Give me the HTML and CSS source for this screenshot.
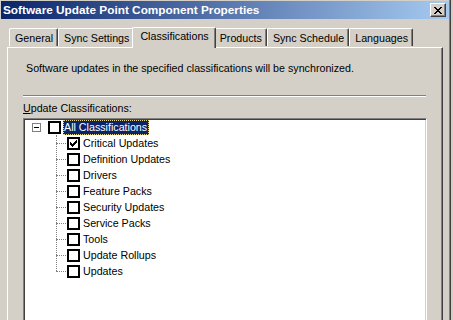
FILE: index.html
```html
<!DOCTYPE html>
<html lang="en">
<head>
  <meta charset="UTF-8">
  <title>Software Update Point Component Properties</title>
  <link rel="stylesheet" href="styles.css">
</head>
<body>
  <div class="window">
    <div class="titlebar">
      <span class="title">Software Update Point Component Properties</span>
      <button class="close-btn" title="Close">
        <svg width="8" height="7" viewBox="0 0 8 7" shape-rendering="crispEdges">
          <path d="M0 0h2v1h-2z M6 0h2v1h-2z M1 1h2v1h-2z M5 1h2v1h-2z M2 2h4v1h-4z M3 3h2v1h-2z M2 4h4v1h-4z M1 5h2v1h-2z M5 5h2v1h-2z M0 6h2v1h-2z M6 6h2v1h-2z" fill="#000"/>
        </svg>
      </button>
    </div>

    <div class="client">
      <div class="tabs">
        <div class="tab">General</div>
        <div class="tab">Sync Settings</div>
        <div class="tab active">Classifications</div>
        <div class="tab">Products</div>
        <div class="tab">Sync Schedule</div>
        <div class="tab">Languages</div>
      </div>

      <div class="panel">
        <p class="intro">Software updates in the specified classifications will be synchronized.</p>
        <div class="separator"></div>
        <div class="label"><u>U</u>pdate Classifications:</div>

        <div class="tree">
          <div class="node root">
            <span class="expander"></span>
            <span class="check"></span>
            <span class="text selected">All Classifications</span>
          </div>
          <div class="children">
            <div class="node">
              <span class="check checked">
                <svg width="7" height="7" viewBox="0 0 7 7" shape-rendering="crispEdges">
                  <path d="M0 2h1v3h-1z M1 3h1v3h-1z M2 4h1v3h-1z M3 3h1v3h-1z M4 2h1v3h-1z M5 1h1v3h-1z M6 0h1v3h-1z" fill="#000"/>
                </svg>
              </span>
              <span class="text">Critical Updates</span>
            </div>
            <div class="node"><span class="check"></span><span class="text">Definition Updates</span></div>
            <div class="node"><span class="check"></span><span class="text">Drivers</span></div>
            <div class="node"><span class="check"></span><span class="text">Feature Packs</span></div>
            <div class="node"><span class="check"></span><span class="text">Security Updates</span></div>
            <div class="node"><span class="check"></span><span class="text">Service Packs</span></div>
            <div class="node"><span class="check"></span><span class="text">Tools</span></div>
            <div class="node"><span class="check"></span><span class="text">Update Rollups</span></div>
            <div class="node"><span class="check"></span><span class="text">Updates</span></div>
          </div>
        </div>
      </div>
    </div>
  </div>
</body>
</html>
```

FILE: styles.css
```css
/* классическое окно свойств в стиле Windows 2000 */
body {
  margin: 0;
  padding: 0;
  background: #d4d0c8;
  font-family: "Liberation Sans", Arial, sans-serif;
  font-size: 10.7px;
  color: #000;
}
.window {
  width: 450px;
  height: 320px;
  overflow: hidden;
  background: #d4d0c8;
  padding: 1px 0 0 1px;
  border-right: 1px solid #808080;
  box-shadow: 1px 0 0 #404040;
  box-sizing: border-box;
}
.titlebar {
  height: 18px;
  display: flex;
  align-items: center;
  justify-content: space-between;
  padding: 0 3px 0 2px;
  background: linear-gradient(to right, #0a246a, #a6caf0);
}
.title {
  color: #fff;
  font-weight: bold;
  font-size: 11.8px;
  white-space: nowrap;
}
.close-btn {
  width: 16px;
  height: 14px;
  padding: 0;
  margin: 0;
  display: flex;
  align-items: center;
  justify-content: center;
  background: #d4d0c8;
  border: 1px solid;
  border-color: #fff #404040 #404040 #fff;
  box-shadow: inset -1px -1px 0 #808080;
}
.client {
  padding: 8px 0 0 6px;
}
.tabs {
  display: flex;
  align-items: flex-end;
  height: 20px;
  padding-left: 2px;
  position: relative;
  z-index: 1;
}
.tab {
  height: 17px;
  line-height: 18px;
  padding: 0 4px 0 5px;
  border-left: 1px solid #fff;
  border-top: 1px solid #fff;
  border-right: 1px solid #404040;
  box-shadow: inset -1px 0 0 #808080;
  border-top-left-radius: 2px;
  border-top-right-radius: 2px;
  background: #d4d0c8;
  white-space: nowrap;
  margin-bottom: 1px;
}
.tab.active {
  line-height: 17px;
  margin: 0 -2px -1px -2px;
  padding: 0 6px 0 7px;
  height: 20px;
  position: relative;
  z-index: 2;
}
.panel {
  width: 436px;
  height: 280px;
  box-sizing: border-box;
  border-left: 1px solid #fff;
  border-top: 1px solid #fff;
  border-right: 1px solid #404040;
  box-shadow: inset -1px 0 0 #808080;
  padding: 0 15px;
}
.intro {
  margin: 14px 0 0 3px;
  line-height: 13px;
}
.separator {
  margin-top: 20px;
  border-top: 1px solid #808080;
  border-bottom: 1px solid #fff;
  margin-right: 1px;
}
.label {
  margin-top: 5px;
  line-height: 13px;
}
.tree {
  margin-top: 3px;
  height: 220px;
  background: #fff;
  border: 1px solid;
  border-color: #808080 #fff #fff #808080;
  box-shadow: inset 1px 1px 0 #404040, inset -1px 0 0 #d4d0c8;
}
.node {
  display: flex;
  align-items: center;
  height: 16px;
  white-space: nowrap;
}
.root {
  padding-left: 8px;
}
.expander {
  width: 9px;
  height: 9px;
  box-sizing: border-box;
  border: 1px solid #808080;
  position: relative;
}
.expander::after {
  content: "";
  position: absolute;
  left: 1px;
  top: 3px;
  width: 5px;
  height: 1px;
  background: #000;
}
.check {
  width: 13px;
  height: 13px;
  box-sizing: border-box;
  border: 2px solid #000;
  background: #fff;
  display: flex;
  align-items: center;
  justify-content: center;
}
.root .check {
  margin-left: 7px;
}
.text {
  margin-left: 1px;
  padding: 0 1px;
  line-height: 13px;
  border: 1px solid transparent;
}
.text.selected {
  margin-left: 2px;
  padding: 0 1px 0 0;
  background: #0a246a;
  color: #fff;
  border: 1px dotted #e8d890;
}
.children {
  margin-left: 32px;
  position: relative;
}
.children::before {
  content: "";
  position: absolute;
  left: 0;
  top: 0;
  bottom: 8px;
  border-left: 1px dotted #808080;
}
.children .node::before {
  content: "";
  width: 10px;
  margin-right: 1px;
  border-top: 1px dotted #808080;
}
```
